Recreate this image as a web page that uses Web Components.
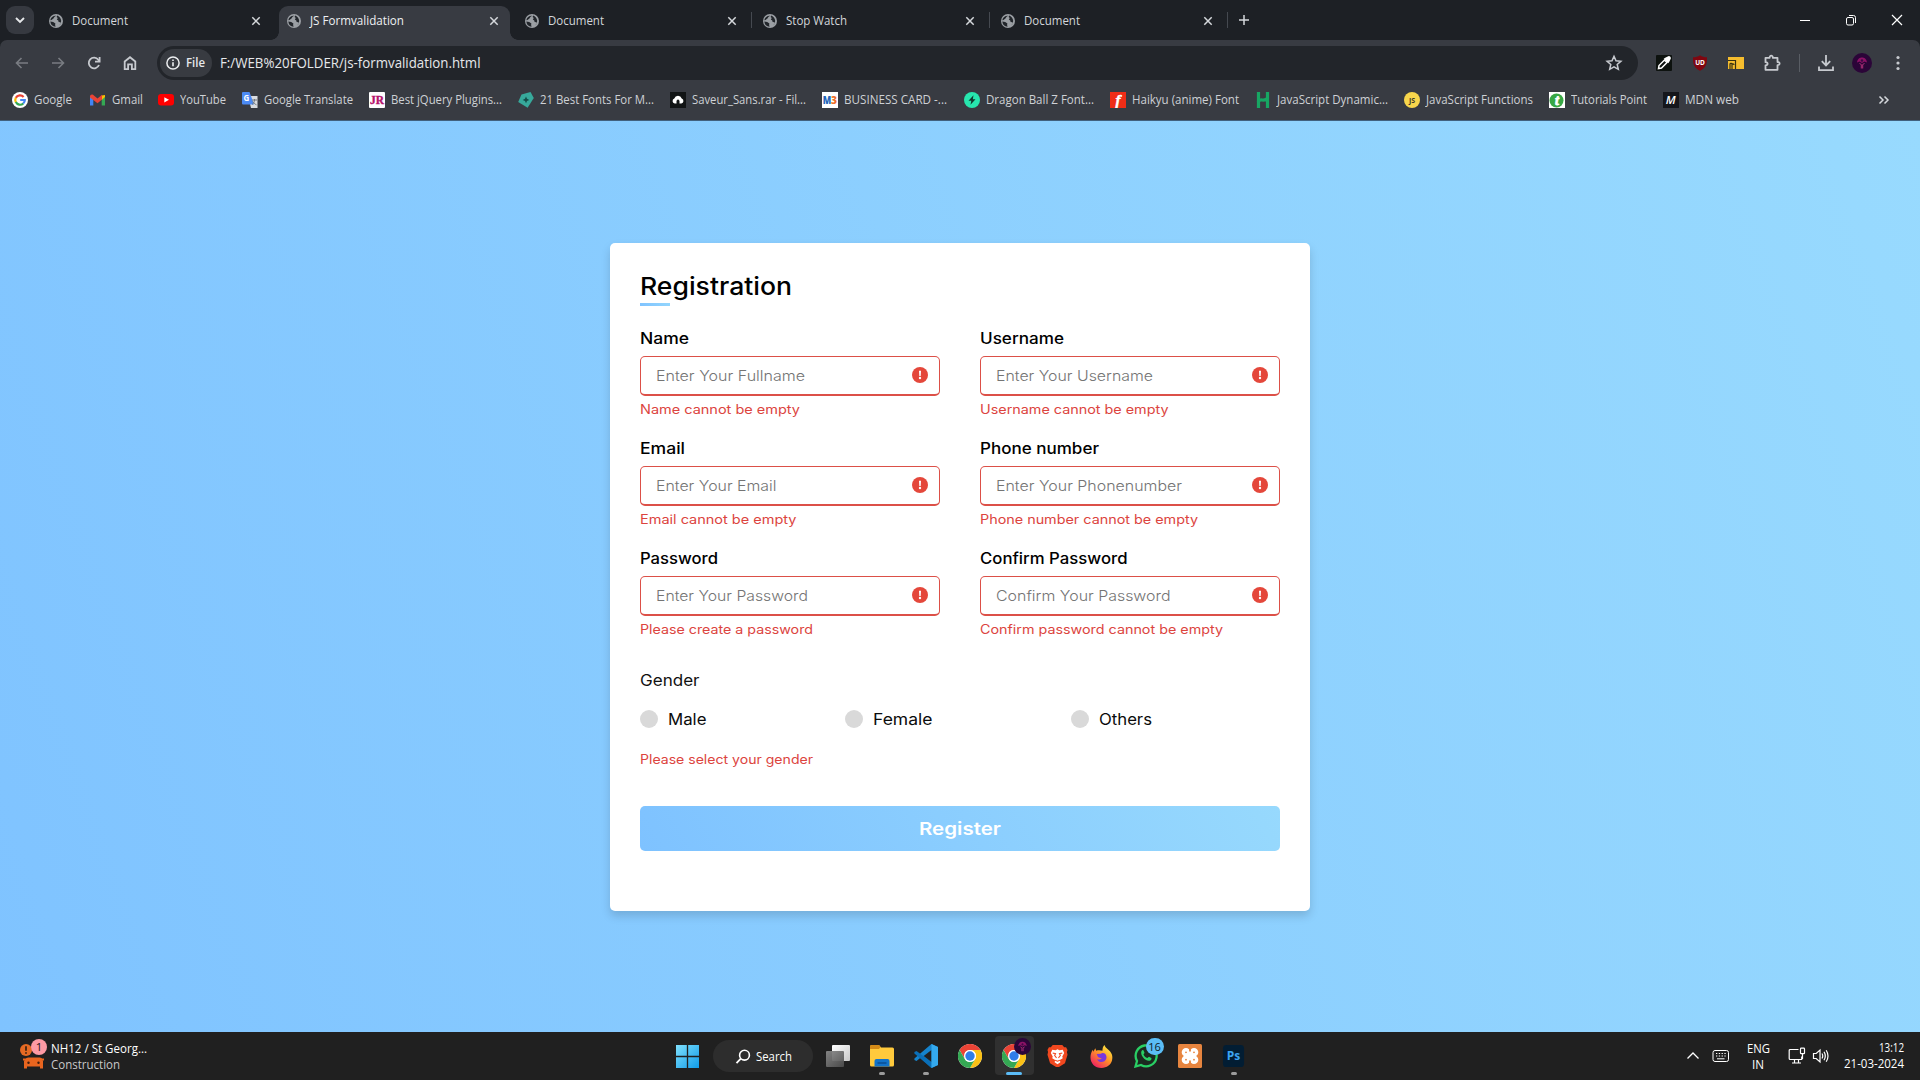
<!DOCTYPE html>
<html lang="en">
<head>
<meta charset="utf-8">
<title>JS Formvalidation</title>
<style>
html,body{margin:0;width:1920px;height:1080px;overflow:hidden;background:#202020}
</style>
</head>
<body>
<desktop-screen></desktop-screen>
<script>
const UI = '"Open Sans","Noto Sans",sans-serif';

function define(name, css, html) {
  customElements.define(name, class extends HTMLElement {
    connectedCallback() {
      if (this.shadowRoot) return;
      const root = this.attachShadow({ mode: 'open' });
      root.innerHTML = `<style>*{box-sizing:border-box}${css}</style>` + (typeof html === 'function' ? html(this) : html);
    }
  });
}

/* Text set to an exact advance width */
customElements.define('fit-text', class extends HTMLElement {
  connectedCallback() {
    if (this.shadowRoot) return;
    const w = +this.getAttribute('w');
    const root = this.attachShadow({ mode: 'open' });
    root.innerHTML = `<style>:host{display:block;flex:none;width:${w}px;white-space:nowrap}span{display:inline-block;transform-origin:0 50%}</style><span><slot></slot></span>`;
    const span = root.querySelector('span');
    span.style.transform = `scaleX(${w / span.getBoundingClientRect().width})`;
  }
});

const chrome = `<circle cx="12" cy="12" r="12" fill="#fff"/>
<path d="M1.6 6A12 12 0 0 1 22.4 6H12a6 6 0 0 0-5.2 3L6.8 15z" fill="#ea4335"/>
<path d="M22.4 6A12 12 0 0 1 12 24l5.2-9a6 6 0 0 0-5.2-9z" fill="#fbc116"/>
<path d="M12 24A12 12 0 0 1 1.6 6l5.2 9a6 6 0 0 0 10.4 0z" fill="#34a853"/>
<circle cx="12" cy="12" r="6" fill="#fff"/><circle cx="12" cy="12" r="4.7" fill="#2f7de9"/>`;
const T = (s, x, y, size, fill, extra = '') => `<text x="${x}" y="${y}" font-family="Open Sans,sans-serif" font-size="${size}" font-weight="700" text-anchor="middle" fill="${fill}" ${extra}>${s}</text>`;
const L = 'fill="none" stroke="#c7cacf" stroke-width="1.8"';

/* name: [viewBox width, viewBox height, markup] */
const ICONS = {
  globe: [14, 14, '<circle cx="7" cy="7" r="7" fill="#9b9fa4"/><path d="M7.3 1.7C6 2.2 5 3 4.700 4.200L2.500 6.100 1.300 6.300A5.800 5.800 0 0 1 7.300 1.700zM1.300 7.600l2.900.5 2.200 1.400-.3 1.500.5 1.700A5.800 5.800 0 0 1 1.300 7.600zM8.200 1.600l-.6 1.500 1.200.9-1 1.500 1.500 1 .3 1.600 2 .2-.3 1.900-1 1.100A5.800 5.800 0 0 0 8.200 1.600z" fill="#22262b"/>'],
  caret: [14, 14, '<path d="M3 5l4 4 4-4" fill="none" stroke="#e6e8ea" stroke-width="1.9"/>'],
  close: [12, 12, '<path d="M2.300 2.300l7.400 7.400M9.700 2.300L2.300 9.700" stroke="#d5d8dc" stroke-width="1.500"/>'],
  plus: [14, 14, '<path d="M7 2v10M2 7h10" stroke="#d5d8dc" stroke-width="1.500"/>'],
  min: [12, 12, '<path d="M1 6.500h10" stroke="#fff"/>'],
  restore: [12, 12, '<g fill="none" stroke="#fff"><rect x="1.500" y="3.500" width="7" height="7.500" rx="1.500"/><path d="M4 1.500h4.500a2 2 0 0 1 2 2V9"/></g>'],
  wclose: [12, 12, '<path d="M1 1l10 10M11 1L1 11" stroke="#fff" stroke-width="1.200"/>'],
  back: [16, 16, '<path d="M14 8H2.500M7.500 3L2.500 8 7.500 13" fill="none" stroke="#797c82" stroke-width="1.600"/>'],
  fwd: [16, 16, '<path d="M2 8h11.500M8.500 3L13.500 8 8.500 13" fill="none" stroke="#797c82" stroke-width="1.600"/>'],
  reload: [16, 16, `<path d="M13 10A5.300 5.300 0 1 1 12.300 4.800L13.500 6" ${L}/><path d="M13.600 2v4.700H9" ${L}/>`],
  home: [16, 16, `<path d="M2.700 6.500L8 2.200l5.300 4.300V14.200H9.900V9.300H6.100v4.900H2.700z" ${L}/>`],
  info: [14, 14, '<circle cx="7" cy="7" r="6.100" fill="none" stroke="#eceef0" stroke-width="1.500"/><path d="M7 6.300v4M7 3.400v1.600" stroke="#eceef0" stroke-width="1.600"/>'],
  star: [18, 18, `<path d="M9 2.300l2 4.500 4.900.5-3.700 3.200 1.100 4.800L9 12.800l-4.300 2.500 1.100-4.800L2.100 7.300 7 6.800z" fill="none" stroke="#c7cacf" stroke-width="1.500"/>`],
  dropper: [16, 16, '<rect width="16" height="16" rx="1" fill="#0d120f"/><path d="M2.500 13.500l.5-3 5.500-5.500 2.500 2.500-5.500 5.500z" fill="none" stroke="#fff" stroke-width="1.500"/><path d="M7.700 3.700l4.600 4.600 1-1.500 1.200-2.500a2 2 0 0 0-2.800-2.800L9.200 2.700z" fill="#fff"/>'],
  ublock: [16, 16, '<path d="M8 .3c2 1.400 4 2 7 2 .3 7-1.500 11-7 13.500C2.500 13.300.7 9.300 1 2.300c3 0 5-.6 7-2z" fill="#800610"/>' + T('UD', 8, 10, 6.5, '#fff')],
  cast: [16, 12, '<rect width="16" height="12" fill="#f6bd2e"/><path d="M0 3.500h7.500V12M2 12V7c0-1 2-1 2 0v5M4 8c0-1.500 2-1.500 2 0" fill="none" stroke="#39310f" stroke-width="1.200"/>'],
  puzzle: [18, 18, `<path d="M2.500 3.800h4.200c-.5-2.800 3.500-2.800 3.100 0h4.700v4.200c2.800-.2 2.800 3.300 0 3.100v4.700H2.500v-4.300c2.800-.3 2.800-3.100 0-3.300z" ${L} stroke-linejoin="round"/>`],
  download: [18, 18, `<path d="M9 1v10M4.800 7.200L9 11.400l4.200-4.200M2 12.500v3.700h14v-3.700" ${L}/>`],
  avatar: [20, 20, '<circle cx="10" cy="10" r="10" fill="#2b0538"/><path d="M5 9.500C5.500 5.500 8 4.500 10 4.500s4.500 1 5 5l-2.500-1L10 10 7.500 8.500z" fill="#8d1266"/><path d="M7.500 10.500l1.800 1v4M12.500 10.500l-1.800 1v4" stroke="#b02f78" fill="none"/><circle cx="10" cy="7.500" r="1.200" fill="#3b0a44"/>'],
  dots: [16, 18, '<g fill="#c7cacf"><circle cx="8" cy="3.500" r="1.600"/><circle cx="8" cy="9" r="1.600"/><circle cx="8" cy="14.500" r="1.600"/></g>'],
  more: [14, 14, '<path d="M2.500 3.500l3.500 3.500-3.500 3.500M7.500 3.500l3.500 3.500-3.500 3.500" fill="none" stroke="#d5d8dc" stroke-width="1.500"/>'],
  google: [16, 16, '<circle cx="8" cy="8" r="8" fill="#fff"/><g fill="none" stroke-width="2.200"><path d="M11.600 5A4.800 4.800 0 0 0 3.800 5.900" stroke="#ea4335"/><path d="M3.800 5.800a4.800 4.800 0 0 0 0 4.400" stroke="#fbbc05"/><path d="M3.800 10.100A4.800 4.800 0 0 0 11.300 11.500" stroke="#34a853"/><path d="M11.200 11.500A4.600 4.600 0 0 0 12.800 8H8.200" stroke="#4285f4"/></g>'],
  gmail: [15, 12, '<path d="M0 2v9.500h3.300V4z" fill="#4285f4"/><path d="M11.700 4v7.500H15V2z" fill="#34a853"/><path d="M11.700 1.500L15 1v2l-3.300 3z" fill="#fbbc04"/><path d="M0 2.500C0 .5 2 0 3 .8L7.500 4.600 12 .8v4.800L7.500 9.300 3.300 6 0 3.500z" fill="#ea4335"/>'],
  youtube: [16, 12, '<rect width="16" height="11.500" rx="3" fill="#f00"/><path d="M6.300 3.200v5.200L11 5.800z" fill="#fff"/>'],
  translate: [16, 16, '<path d="M6 4h9.500v12H9z" fill="#dadce0"/><path d="M0 1a1 1 0 0 1 1-1h6.500L12 12.500H1a1 1 0 0 1-1-1z" fill="#4c8bf5"/><path d="M10 8h5M12.500 7v1c0 2-1 3.500-2.500 4.500M10.800 9.500c.7 1.500 2 2.500 3.700 3.300" fill="none" stroke="#73777c"/>' + T('G', 4.5, 9, 8, '#fff')],
  jr: [16, 16, '<rect width="16" height="16" rx="1" fill="#fff"/><text x="8" y="12" font-family="Liberation Serif,serif" font-size="12" font-weight="700" text-anchor="middle" fill="#b5126c" stroke="#b5126c" stroke-width=".4" textLength="14" lengthAdjust="spacingAndGlyphs">JR</text>'],
  tag: [16, 16, '<path d="M3.500 2.500L12.500 0l3.300 6-6.200 9.800L.2 10z" fill="#37a99b"/><path d="M8 4.500l1 2.300L11.300 8 9 9l-1 2.300L7 9 4.700 8 7 6.800z" fill="#144d49"/>'],
  cloud: [16, 16, '<rect width="16" height="16" fill="#111415"/><path d="M4.700 11.500a2.600 2.600 0 0 1-.4-5 3.900 3.900 0 0 1 7.400 0 2.600 2.600 0 0 1-.4 5H9.500V8.800L8 7.300 6.500 8.800v2.700z" fill="#fff"/>'],
  mb: [16, 16, '<rect width="16" height="16" fill="#fff"/><text x=".7" y="12" font-family="Open Sans,sans-serif" font-size="10.500" font-weight="800" textLength="8.500" lengthAdjust="spacingAndGlyphs" fill="#2266ba">M</text><text x="9" y="12" font-family="Open Sans,sans-serif" font-size="10.500" font-weight="800" textLength="6" lengthAdjust="spacingAndGlyphs" fill="#ef702a">3</text>'],
  bolt: [16, 16, '<circle cx="8" cy="8" r="8" fill="#27e6ae"/><path d="M9.500 3.300L4.500 8.800h2.800L6.500 12.700 11.500 7.200H8.800z" fill="#10382e"/>'],
  haikyu: [16, 16, '<rect width="16" height="16" fill="#ef2d17"/><text x="8" y="12.500" font-family="Liberation Serif,serif" font-size="15" font-style="italic" font-weight="700" text-anchor="middle" fill="#fff" stroke="#fff" stroke-width=".5">f</text>'],
  h: [14, 16, '<path d="M2.500 0v16M11.500 0v16M2 10c3-5 5 1 10-4" fill="none" stroke="#17a663" stroke-width="3.200"/>'],
  js: [16, 16, '<circle cx="8" cy="8" r="8" fill="#f7d64c"/>' + T('JS', 8, 10.6, 7, '#3c3a2a')],
  tp: [16, 16, '<rect width="16" height="16" fill="#fff"/><circle cx="7.500" cy="8.500" r="7" fill="#37a744"/><text x="8" y="12.500" font-family="Liberation Serif,serif" font-size="14" font-style="italic" font-weight="700" text-anchor="middle" fill="#fff" stroke="#fff" stroke-width=".8">t</text>'],
  mdn: [16, 16, '<rect width="16" height="16" fill="#15161b"/><text x="7.800" y="12.300" font-family="Open Sans,sans-serif" font-size="11.500" font-style="italic" font-weight="600" text-anchor="middle" fill="#fff">M</text>'],
  error: [16, 16, '<circle cx="8" cy="8" r="8" fill="#e4473b"/><path d="M7 3.800h2L8.700 9H7.300z" fill="#fff"/><circle cx="8" cy="11" r="1.200" fill="#fff"/>'],
  traffic: [28, 30, '<circle cx="7" cy="11" r="6" fill="#e66a23"/><path d="M7 7.200v4.600M7 13.200v1.600" stroke="#2b1b12" stroke-width="1.600"/><path d="M7.500 19l1.800-0.500h11.400l1.800.5 1.500 3v7.500h-3v-2H8v2H5V22z" fill="#e8651f"/><path d="M4 20.500h4M22 20.500h3" stroke="#e8651f" stroke-width="2"/><circle cx="9.500" cy="23.700" r="1.200" fill="#3d1e10"/><circle cx="19.500" cy="23.700" r="1.200" fill="#3d1e10"/><circle cx="20" cy="8" r="8" fill="#fd9aa4"/><text x="20" y="12" font-family="Open Sans,sans-serif" font-size="11.500" text-anchor="middle" fill="#241316">1</text>'],
  start: [24, 24, '<defs><linearGradient id="g" x1="0" y1="0" x2="24" y2="24" gradientUnits="userSpaceOnUse"><stop stop-color="#7fe0fd"/><stop offset="1" stop-color="#109be9"/></linearGradient></defs><path d="M0 0h11.300v11.300H0zM12.700 0H24v11.300H12.700zM0 12.700h11.300V24H0zM12.700 12.700H24V24H12.700z" fill="url(#g)"/>'],
  search: [16, 16, '<circle cx="9.500" cy="6.200" r="4.900" fill="none" stroke="#fff" stroke-width="1.600"/><path d="M5.800 9.600L1.500 14.200" stroke="#fff" stroke-width="1.800"/>'],
  taskview: [24, 22, '<defs><linearGradient id="g" x2="1" y2="1"><stop stop-color="#fff"/><stop offset="1" stop-color="#c9c9c9"/></linearGradient><linearGradient id="h" x2="1" y2="1"><stop stop-color="#8a8a8a"/><stop offset="1" stop-color="#4d4d4d"/></linearGradient></defs><rect x="6" width="18" height="16" rx="1" fill="url(#g)"/><rect y="6" width="18" height="16" rx="1" fill="url(#h)" opacity=".93"/>'],
  folder: [24, 24, '<path d="M0 2.500A1.500 1.500 0 0 1 1.500 1H9l2 2.500h11.500A1.500 1.500 0 0 1 24 5v16a1.500 1.500 0 0 1-1.500 1.500h-21A1.500 1.500 0 0 1 0 21z" fill="#ffca3c"/><path d="M0 2.500A1.500 1.500 0 0 1 1.500 1H9l1.500 2L9 5H0z" fill="#d38a17"/><path d="M4.500 22.500V17a2 2 0 0 1 2-2h11a2 2 0 0 1 2 2v5.500z" fill="#1273c9"/><path d="M7.500 19h9" stroke="#0a4e93" stroke-width="1.500"/>'],
  vscode: [24, 24, '<path d="M17.500 0L24 3v18l-6.500 3L6.500 13.800 2.500 17 .4 16v-1.500l17-14.500z" fill="#1583cc"/><path d="M.4 8L2.500 7l15 11V24L.4 9.500z" fill="#0a6fb8"/><path d="M17.500 6v12L9.700 12z" fill="#202020"/><path d="M17.500 0L24 3v18l-6.500 3z" fill="#34a9ee"/>'],
  chrome: [24, 24, chrome],
  brave: [22, 24, '<path d="M6 0h10l2 2.400 2-.1 1.500 3-.6 2 .6 3-2.700 8.800L11 24l-7.800-4.900L.5 10.300l.6-3-.6-2 1.500-3 2 .1z" fill="#f1481f"/><path d="M5.500 5l3.500.5 2-1 2 1L16.500 5l1.500 3.500-2 3.500.5 2-3 1.800L14 18l-3 2.300L8 18l.5-2.200-3-1.800.5-2-2-3.500z" fill="#fff"/><path d="M6 8.500l3 .5-1 2 2 2.500M16 8.500l-3 .5 1 2-2 2.500M8.500 16l2.500 1 2.500-1" fill="none" stroke="#f1481f" stroke-width="1.100"/>'],
  firefox: [24, 24, '<defs><linearGradient id="g" x1=".8" y1=".1" x2=".2" y2=".9"><stop stop-color="#ffe23c"/><stop offset=".45" stop-color="#ff9328"/><stop offset="1" stop-color="#f0285f"/></linearGradient></defs><path d="M15 0c1 1.500 1 2.500 3 4 5 4 6 7.500 5 12-1.200 4.800-5.500 8-11 8C5 24 .5 19 .5 13c0-3 1-6 2.500-8l.5 2L5.500 3.500 6.500 6c2-.8 5-.5 6.500 0 0-2.500.5-4.500 2-6z" fill="url(#g)"/><path d="M7 9.500l4.500-.5c1.500-1 3.500-.5 4.500.5 2 2.500 1.500 6-1 7.500-3 1.600-7 .5-7.700-2.500 1.500 1.200 3.500.5 5-.5l-3-1c-1.300-.5-1.500-1.500-2.300-3.500z" fill="#7a37dc"/>'],
  whatsapp: [24, 24, '<path d="M1.500 22.500L3 17a10.500 10.500 0 1 1 4 4z" fill="#1b2a20" stroke="#29cf64" stroke-width="2.300"/><path d="M7.500 7c1-1.400 2-1 2.400.2l.6 1.600c0 .7-.8 1-1 1.600.8 1.800 2 2.900 3.800 3.600.7 0 1.200-1.200 1.800-1.200l2.200 1.100c.7.700-.2 2.400-1.500 2.800-4.500 1-10-5.500-8.300-9.700z" fill="#29cf64"/>'],
  xampp: [24, 24, '<rect width="24" height="24" rx="1.500" fill="#e7853f"/><g fill="none" stroke="#fff" stroke-width="3.400"><circle cx="8" cy="8.300" r="2.600"/><circle cx="16" cy="8.300" r="2.600"/><circle cx="8" cy="15.700" r="2.600"/><circle cx="16" cy="15.700" r="2.600"/></g><path d="M7 12h10" stroke="#fff" stroke-width="4.500"/><path d="M8 10.500h1v3H8zM15 10.500h1v3h-1z" fill="#fff"/><path d="M12 3v4.500M12 16.500V21" stroke="#e7853f" stroke-width="1.800"/>'],
  ps: [24, 24, '<rect x="1" width="22" height="23" rx="3.500" fill="#021d33"/>' + T('Ps', 12, 15.7, 12.5, '#3da5f4')],
  chevron: [14, 14, '<path d="M1.500 9.500L7 4l5.500 5.500" fill="none" stroke="#fff" stroke-width="1.300"/>'],
  keyboard: [18, 14, '<g fill="none" stroke="#fff"><rect x="1" y="1.500" width="15.500" height="11" rx="2"/><path d="M4 4.500h10M4 7h10" stroke-dasharray="1.300 1.500"/><path d="M5 9.800h7.500"/></g>'],
  network: [18, 18, '<g fill="none" stroke="#fff" stroke-width="1.200"><path d="M10.500 2.500H2.200a1 1 0 0 0-1 1v8a1 1 0 0 0 1 1h11.500V9.500M4 16h9M6.500 13v3M10.500 13v3"/><rect x="12.500" y="1.200" width="4" height="5.500" rx=".8"/><path d="M14.500 6.700V12"/></g>'],
  speaker: [18, 16, '<g fill="none" stroke="#fff" stroke-width="1.200"><path d="M1.500 5.500h2.700L8 2v12l-3.800-3.500H1.500z"/><path d="M10 5.500q1.500 2.500 0 5M12 3.800q2.600 4.200 0 8.400M14.200 2.200q3.600 5.800 0 11.600"/></g>']
};
define('ui-icon', ':host{display:block;flex:none}svg{display:block}', e => {
  const [w, h, body] = ICONS[e.getAttribute('name')];
  const W = +(e.getAttribute('w') || w);
  return `<svg width="${W}" height="${W * h / w}" viewBox="0 0 ${w} ${h}">${body}</svg>`;
});
/* Icon centred in a column of given width */
define('icon-cell', ':host{display:flex;flex:none;align-items:center;justify-content:center}', e =>
  `<style>:host{width:${e.getAttribute('cell')}px}</style><ui-icon name="${e.getAttribute('name')}" w="${e.getAttribute('w') || ''}"></ui-icon>`);

define('browser-tab', `
:host{display:flex;width:238px;height:34px;position:relative;align-items:center;padding:0 0 5px 8px;font:12px/28px ${UI};color:#d3d6da}
.t{flex:1;padding-left:9px}.x{margin-right:17px}
.sep{position:absolute;left:234px;top:6px;width:1px;height:16px;background:#454950}
:host([active]){color:#eef0f2}
.bg{display:none}:host([active]) .bg{display:block;position:absolute;left:0;top:0;width:231px;height:34px;background:#383b42;border-radius:9px 9px 0 0}
.bg:before,.bg:after{content:"";position:absolute;bottom:0;width:8px;height:8px}
.bg:before{left:-8px;background:radial-gradient(circle at 0 0,transparent 7.500px,#383b42 8px)}
.bg:after{right:-8px;background:radial-gradient(circle at 100% 0,transparent 7.500px,#383b42 8px)}
ui-icon,.t{position:relative}`, e => `<div class="bg"></div><ui-icon name="globe"></ui-icon><div class="t"><fit-text w="${e.getAttribute('w')}">${e.textContent}</fit-text></div><ui-icon class="x" name="close"></ui-icon>${e.hasAttribute('sep') ? '<div class="sep"></div>' : ''}`);

define('tab-strip', `
:host{display:flex;height:40px;background:#1d2025;padding:6px 0 0 6px}
.drop{width:28px;height:28px;border-radius:9px;background:#363940;display:flex;align-items:center;justify-content:center;margin-right:7px}
icon-cell{height:28px}.space{flex:1}`, `
<div class="drop"><ui-icon name="caret"></ui-icon></div>
<browser-tab w="56">Document</browser-tab><browser-tab active w="94">JS Formvalidation</browser-tab><browser-tab sep w="56">Document</browser-tab><browser-tab sep w="61">Stop Watch</browser-tab><browser-tab sep w="56">Document</browser-tab>
<icon-cell name="plus" cell="26"></icon-cell><div class="space"></div>
<icon-cell name="min" cell="46"></icon-cell><icon-cell name="restore" cell="46"></icon-cell><icon-cell name="wclose" cell="46"></icon-cell>`);

define('address-bar', `
:host{display:flex;height:46px;padding:6px 4px 6px 4px;background:#383b42;border-radius:7px 7px 0 0;font:14px/34px ${UI};color:#e6e8eb}
.nav,.tools{display:flex}.nav{width:153px}
.box{width:1481px;height:34px;border-radius:17px;background:#22252a;display:flex;align-items:center;padding-left:3px}
.chip{width:52px;height:28px;border-radius:14px;background:#383b41;display:flex;align-items:center;padding-left:6px;gap:6px;font:600 12px/28px ${UI};margin-right:8px}
.space{flex:1}.sep{width:1px;height:18px;margin:8px 8px 0 9px;background:#595d64}.tools{padding-left:8px}`, `
<div class="nav"><icon-cell name="back" cell="36"></icon-cell><icon-cell name="fwd" cell="36"></icon-cell><icon-cell name="reload" cell="36"></icon-cell><icon-cell name="home" cell="36"></icon-cell></div>
<div class="box"><div class="chip"><ui-icon name="info"></ui-icon><fit-text w="19">File</fit-text></div><fit-text w="260.500">F:/WEB%20FOLDER/js-formvalidation.html</fit-text><div class="space"></div><icon-cell name="star" cell="48"></icon-cell></div>
<div class="tools"><icon-cell name="dropper" cell="36"></icon-cell><icon-cell name="ublock" cell="36"></icon-cell><icon-cell name="cast" cell="36"></icon-cell><icon-cell name="puzzle" cell="36"></icon-cell><div class="sep"></div><icon-cell name="download" cell="36"></icon-cell><icon-cell name="avatar" cell="36"></icon-cell><icon-cell name="dots" cell="36"></icon-cell></div>`);

const MARKS = [['google','Google',38,77.5],['gmail','Gmail',31,68.5],['youtube','YouTube',46,84],['translate','Google Translate',89,127],['jr','Best jQuery Plugins...',111,149],['tag','21 Best Fonts For M...',114,152],['cloud','Saveur_Sans.rar - Fil...',114,152],['mb','BUSINESS CARD -...',103,142],['bolt','Dragon Ball Z Font...',108,146],['haikyu','Haikyu (anime) Font',107,145],['h','JavaScript Dynamic...',111,149],['js','JavaScript Functions',107,145],['tp','Tutorials Point',76,113.5],['mdn','MDN web',54,80]];
define('bookmark-bar', `
:host{display:flex;height:35px;padding:0 25px 6px 12px;background:#383b42;font:11.800px/26px ${UI};color:#ced1d5;border-bottom:1px solid #41617e;align-items:center}
.i{display:flex;align-items:center;flex:none;gap:6px;height:28px}.space{flex:1}fit-text{height:28px}`,
MARKS.map(([n, t, w, p]) => `<div class="i" style="width:${p}px"><icon-cell cell="16" name="${n}"></icon-cell><fit-text w="${w}">${t}</fit-text></div>`).join('') + '<div class="space"></div><icon-cell name="more" cell="22"></icon-cell>');

define('form-field', `
:host{display:block;height:110px;width:300px}
.l{font:500 15.500px/26px Inter,sans-serif;font-weight:460;height:24px;color:#000}
.in{height:40px;margin-top:6px;border:1px solid #dc5048;border-bottom-width:2px;border-radius:5px;display:flex;align-items:flex-start;justify-content:space-between;padding:0 11px 0 15px;font:400 14.500px/37px Inter,sans-serif;font-weight:360;color:#747474}
.in ui-icon{margin-top:10px}
.e{margin-top:4px;font:400 12.800px/20px Inter,sans-serif;color:#dc443e}`, e => {
  const a = n => e.getAttribute(n);
  return `<div class="l"><fit-text w="${a('lw')}">${a('label')}</fit-text></div><div class="in"><fit-text w="${a('pw')}">${a('hint')}</fit-text><ui-icon name="error"></ui-icon></div><div class="e"><fit-text w="${a('ew')}">${a('error')}</fit-text></div>`;
});
define('radio-option', `:host{display:flex;align-items:flex-start;height:20px;gap:10px;font:400 15.500px/22px Inter,sans-serif;font-weight:380;color:#0b0b0b}i{width:18px;height:18px;margin-top:1px;border-radius:50%;background:#d9d9d9}`,
  e => `<i></i><fit-text w="${e.getAttribute('w')}">${e.textContent}</fit-text>`);

define('registration-form', `
:host{display:block;width:700px;height:668px;background:#fff;border-radius:5px;padding:25px 30px;box-shadow:0 5px 10px rgba(0,0,0,.15)}
.title{position:relative;height:38px;font:500 24.500px/37px Inter,sans-serif;font-weight:460;color:#000}
.title:after{content:"";position:absolute;left:0;top:35px;width:30px;height:3px;background:linear-gradient(60deg,#7fc3ff,#94d6fd)}
.grid{display:grid;grid-template-columns:300px 300px;justify-content:space-between;margin-top:20px}
.g{margin-top:12px;height:24px;font:400 15.500px/26px Inter,sans-serif;font-weight:380;color:#111}
.radios{display:flex;margin-top:17px}
.e{margin-top:20px;height:20px;font:400 12.800px/22px Inter,sans-serif;color:#dc443e}
.btn{margin-top:37px;height:45px;border-radius:5px;background:linear-gradient(60deg,#7ec2ff,#97d9fd);display:flex;justify-content:center;font:600 17.500px/45px Inter,sans-serif;color:#fff}`, `
<div class="title"><fit-text w="152">Registration</fit-text></div>
<div class="grid">
<form-field label="Name" lw="49" hint="Enter Your Fullname" pw="149" error="Name cannot be empty" ew="160"></form-field>
<form-field label="Username" lw="84" hint="Enter Your Username" pw="157" error="Username cannot be empty" ew="188.500"></form-field>
<form-field label="Email" lw="45" hint="Enter Your Email" pw="120.500" error="Email cannot be empty" ew="156.500"></form-field>
<form-field label="Phone number" lw="119" hint="Enter Your Phonenumber" pw="186" error="Phone number cannot be empty" ew="218"></form-field>
<form-field label="Password" lw="78" hint="Enter Your Password" pw="152" error="Please create a password" ew="173"></form-field>
<form-field label="Confirm Password" lw="147.500" hint="Confirm Your Password" pw="174.500" error="Confirm password cannot be empty" ew="243"></form-field>
</div>
<div class="g"><fit-text w="59.500">Gender</fit-text></div>
<div class="radios"><radio-option style="width:205px" w="38.500">Male</radio-option><radio-option style="width:226px" w="59.500">Female</radio-option><radio-option w="53">Others</radio-option></div>
<div class="e"><fit-text w="173">Please select your gender</fit-text></div>
<div class="btn"><fit-text w="82">Register</fit-text></div>`);

define('web-page', `:host{display:flex;justify-content:center;height:911px;padding-top:122px;background:linear-gradient(70deg,#7fc3ff,#98dafe)}`, '<registration-form></registration-form>');

define('task-button', `
:host{display:flex;position:relative;width:44px;height:48px;align-items:center;justify-content:center}
:host([active]):before{content:"";position:absolute;left:3px;top:4px;width:39px;height:39px;border-radius:4px;background:#303030}
ui-icon{position:relative}
.run{position:absolute;left:19px;bottom:5px;width:6px;height:3px;border-radius:2px;background:#9c9c9c}
:host([active]) .run{left:14px;width:16px;background:#5bbcf7}
.badge{position:absolute;left:22px;top:6px}
.num{position:absolute;left:22px;top:6px;width:18px;height:17px;border-radius:9px;background:#5bbdf5;color:#0d1c26;font:11px/17px ${UI};text-align:center}`, e =>
  `<ui-icon name="${e.getAttribute('icon')}" w="${e.getAttribute('w') || ''}"></ui-icon>` +
  (e.hasAttribute('run') ? '<div class="run"></div>' : '') +
  (e.hasAttribute('active') ? '<ui-icon class="badge" style="position:absolute" name="avatar" w="17"></ui-icon>' : '') +
  (e.hasAttribute('count') ? `<div class="num">${e.getAttribute('count')}</div>` : ''));

define('task-bar', `
:host{display:flex;height:48px;background:#202020;color:#fff;font:12px/16px ${UI};padding:0 16px 0 19px}
.widget{display:flex;width:646.500px}.widget ui-icon{margin-top:7px}.wt{padding:9px 0 0 4px}.wt .s{color:#c9c9c9}
.mid{display:flex;align-items:center}
.search{width:100px;height:32px;border-radius:16px;background:#2d2d2d;display:flex;align-items:center;padding:1px 0 0 22px;gap:5px;margin:0 2.500px 0 3.500px}
.space{flex:1}.tray{display:flex}.lang,.clock{display:flex;flex-direction:column;padding-top:9px}
.lang{align-items:center;width:22px;margin:0 18px 0 8px}.clock{align-items:flex-end;width:60px;margin-left:9px;padding-top:8px}`, `
<div class="widget"><ui-icon name="traffic"></ui-icon><div class="wt"><fit-text w="96">NH12 / St Georg...</fit-text><fit-text class="s" w="69">Construction</fit-text></div></div>
<div class="mid"><task-button icon="start" w="23"></task-button>
<div class="search"><ui-icon name="search"></ui-icon><fit-text w="36">Search</fit-text></div>
<task-button icon="taskview"></task-button><task-button icon="folder" run></task-button><task-button icon="vscode" run></task-button><task-button icon="chrome"></task-button><task-button icon="chrome" active run></task-button><task-button icon="brave" w="21"></task-button><task-button icon="firefox" w="23"></task-button><task-button icon="whatsapp" count="16"></task-button><task-button icon="xampp"></task-button><task-button icon="ps" w="23" run></task-button></div>
<div class="space"></div>
<div class="tray"><icon-cell name="chevron" cell="20"></icon-cell><icon-cell name="keyboard" cell="36"></icon-cell>
<div class="lang"><fit-text w="23">ENG</fit-text><fit-text w="12">IN</fit-text></div>
<icon-cell name="network" cell="20"></icon-cell><icon-cell name="speaker" cell="28"></icon-cell>
<div class="clock"><fit-text w="25">13:12</fit-text><fit-text w="60">21-03-2024</fit-text></div></div>`);

define('desktop-screen', ':host{display:flex;flex-direction:column;width:1920px;height:1080px}.top{background:#1d2025}', '<div class="top"><tab-strip></tab-strip><address-bar></address-bar><bookmark-bar></bookmark-bar></div><web-page></web-page><task-bar></task-bar>');
</script>
</body>
</html>
